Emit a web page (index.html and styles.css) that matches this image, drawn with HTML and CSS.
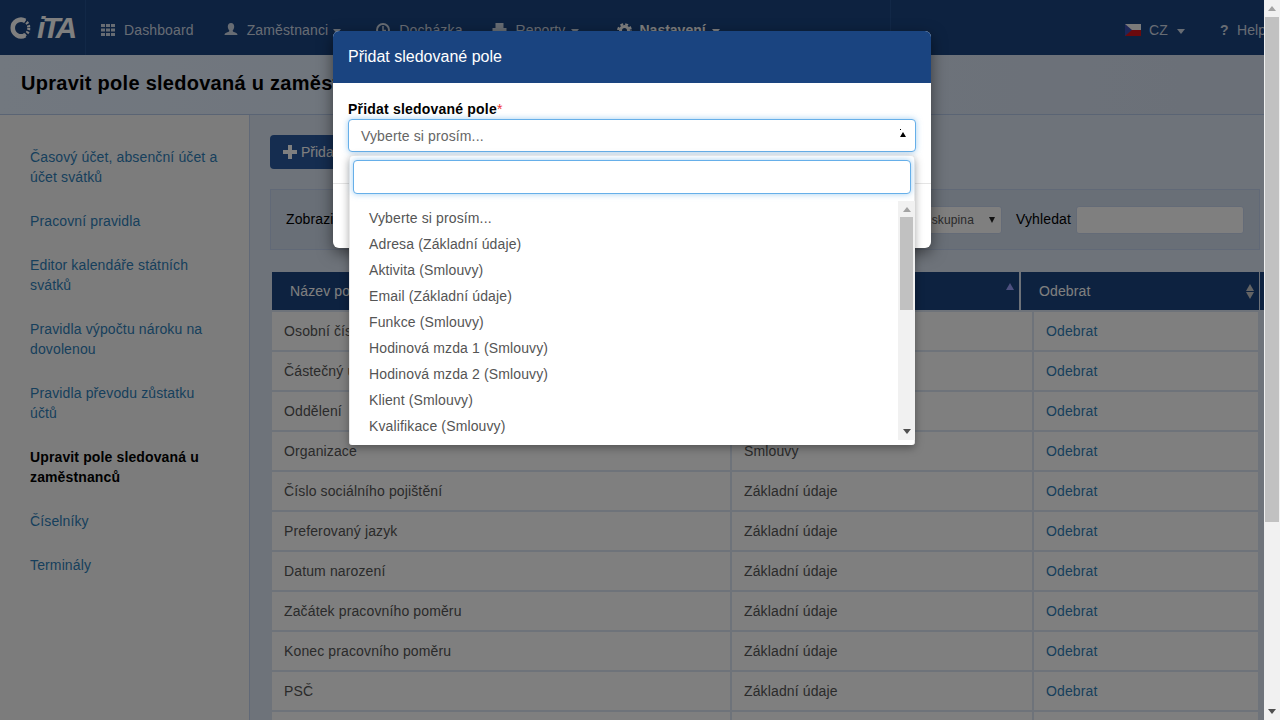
FILE: index.html
```html
<!DOCTYPE html>
<html lang="cs">
<head>
<meta charset="utf-8">
<title>Upravit pole sledovaná u zaměstnanců</title>
<link rel="stylesheet" href="styles.css">
</head>
<body>
<div class="viewport">
  <div class="app">
    <header class="nav">
      <div class="nav-left">
        <a class="logo">
          <svg class="logo-ring" width="22" height="22" viewBox="0 0 24 24"><path d="M16.5 4.200A9 9 0 1 0 16.500 19.800" fill="none" stroke="currentColor" stroke-width="5"/><circle cx="12" cy="12" r="8.600" fill="none" stroke="currentColor" stroke-width="3.600" stroke-dasharray="2.200 1.700" class="logo-dash"/></svg>
          <span class="logo-text">iTA</span>
        </a>
        <a class="nav-item first">
          <svg class="ico" width="14" height="12" viewBox="0 0 14 12"><path fill="currentColor" d="M0 0h4v3H0zM5 0h4v3H5zM10 0h4v3h-4zM0 4.500h4v3H0zM5 4.500h4v3H5zM10 4.500h4v3h-4zM0 9h4v3H0zM5 9h4v3H5zM10 9h4v3h-4z"/></svg>
          <span>Dashboard</span>
        </a>
        <a class="nav-item">
          <svg class="ico" width="14" height="14" viewBox="0 0 14 14"><path fill="currentColor" d="M7 0c2.100 0 3.200 1.500 3.200 3.600 0 1.600-.7 3.100-1.500 3.800-.2.800.4 1.200 2 1.800 1.500.6 2.800 1.200 2.800 2.800H.5c0-1.600 1.300-2.200 2.800-2.800 1.600-.6 2.200-1 2-1.800C4.500 6.700 3.800 5.200 3.800 3.600 3.800 1.500 4.900 0 7 0z"/></svg>
          <span>Zaměstnanci</span><i class="caret tight"></i>
        </a>
        <a class="nav-item">
          <svg class="ico" width="14" height="14" viewBox="0 0 14 14"><circle cx="7" cy="7" r="6" fill="none" stroke="currentColor" stroke-width="2"/><path d="M7 3v4.500h3" fill="none" stroke="currentColor" stroke-width="1.500"/></svg>
          <span>Docházka</span>
        </a>
        <a class="nav-item reports">
          <svg class="ico" width="15" height="14" viewBox="0 0 15 14"><path fill="currentColor" d="M3.500 0h8v5h3v6h-3v3h-8v-3h-3V5h3z"/></svg>
          <span>Reporty</span><i class="caret near"></i>
        </a>
        <a class="nav-item active">
          <svg class="ico" width="15" height="15" viewBox="0 0 15 15"><circle cx="7.500" cy="7.500" r="4" fill="none" stroke="currentColor" stroke-width="3"/><circle cx="7.500" cy="7.500" r="6.200" fill="none" stroke="currentColor" stroke-width="2.400" stroke-dasharray="2.800 2.070"/></svg>
          <span>Nastavení</span><i class="caret near"></i>
        </a>
      </div>
      <div class="nav-right">
        <a class="nav-lang">
          <svg class="flag" width="16" height="12" viewBox="0 0 16 12"><rect width="16" height="6" fill="#f4f4f4"/><rect y="6" width="16" height="6" fill="#d7141a"/><path d="M0 0l7 6-7 6z" fill="#3b4fb0"/></svg>
          <span>CZ</span><i class="caret wide"></i>
        </a>
        <a class="nav-help"><b class="help-mark">?</b><span>Help</span></a>
      </div>
    </header>

    <div class="band"><h1 class="title">Upravit pole sledovaná u zaměstnanců</h1></div>

    <div class="main">
      <aside class="sidebar">
        <a class="side-link">Časový účet, absenční účet a účet svátků</a>
        <a class="side-link">Pracovní pravidla</a>
        <a class="side-link">Editor kalendáře státních svátků</a>
        <a class="side-link">Pravidla výpočtu nároku na dovolenou</a>
        <a class="side-link">Pravidla převodu zůstatku účtů</a>
        <a class="side-link current">Upravit pole sledovaná u zaměstnanců</a>
        <a class="side-link">Číselníky</a>
        <a class="side-link">Terminály</a>
      </aside>

      <section class="content">
        <button class="add-btn"><svg class="plus" width="14" height="14" viewBox="0 0 14 14"><path fill="currentColor" d="M5 0h4v5h5v4H9v5H5V9H0V5h5z"/></svg>Přidat sledované pole</button>

        <div class="filter">
          <span class="filter-label">Zobrazit</span>
          <div class="fake-select"><span>Pracovní skupina</span><i class="down"></i></div>
          <span class="filter-label search-label">Vyhledat</span>
          <div class="fake-input"></div>
        </div>

        <div class="thead">
          <div class="th th-main"><span>Název pole</span><i class="sort-up"></i></div>
          <div class="th th-action"><span>Odebrat</span><i class="sort-both"></i></div>
          <div class="th-rest"></div>
        </div>

        <table class="grid">
          <colgroup><col class="c1"><col class="c2"><col class="c3"></colgroup>
          <tbody>
            <tr><td>Osobní číslo</td><td>Základní údaje</td><td><a class="link">Odebrat</a></td></tr>
            <tr><td>Částečný úvazek</td><td>Smlouvy</td><td><a class="link">Odebrat</a></td></tr>
            <tr><td>Oddělení</td><td>Smlouvy</td><td><a class="link">Odebrat</a></td></tr>
            <tr><td>Organizace</td><td>Smlouvy</td><td><a class="link">Odebrat</a></td></tr>
            <tr><td>Číslo sociálního pojištění</td><td>Základní údaje</td><td><a class="link">Odebrat</a></td></tr>
            <tr><td>Preferovaný jazyk</td><td>Základní údaje</td><td><a class="link">Odebrat</a></td></tr>
            <tr><td>Datum narození</td><td>Základní údaje</td><td><a class="link">Odebrat</a></td></tr>
            <tr><td>Začátek pracovního poměru</td><td>Základní údaje</td><td><a class="link">Odebrat</a></td></tr>
            <tr><td>Konec pracovního poměru</td><td>Základní údaje</td><td><a class="link">Odebrat</a></td></tr>
            <tr><td>PSČ</td><td>Základní údaje</td><td><a class="link">Odebrat</a></td></tr>
            <tr><td></td><td></td><td></td></tr>
          </tbody>
        </table>
      </section>
    </div>

    <div class="overlay"></div>
    <div class="modal-wrap">
      <div class="modal">
        <div class="modal-head">Přidat sledované pole</div>
        <div class="modal-body">
          <label class="field-label">Přidat sledované pole<span class="req">*</span></label>
          <div class="combo">
            <div class="combo-box"><span>Vyberte si prosím...</span><i class="combo-arrow"></i></div>
            <div class="drop">
              <div class="drop-search"><div class="search-box"></div></div>
              <div class="drop-list">
                <ul class="options">
                  <li>Vyberte si prosím...</li>
                  <li>Adresa (Základní údaje)</li>
                  <li>Aktivita (Smlouvy)</li>
                  <li>Email (Základní údaje)</li>
                  <li>Funkce (Smlouvy)</li>
                  <li>Hodinová mzda 1 (Smlouvy)</li>
                  <li>Hodinová mzda 2 (Smlouvy)</li>
                  <li>Klient (Smlouvy)</li>
                  <li>Kvalifikace (Smlouvy)</li>
                </ul>
                <div class="bar drop-bar"><i class="bar-up"></i><div class="bar-thumb drop-thumb"></div><i class="bar-down"></i></div>
              </div>
            </div>
          </div>
        </div>
        <div class="modal-foot"></div>
      </div>
    </div>
  </div>
  <div class="bar page-bar"><i class="bar-up"></i><div class="bar-thumb page-thumb"></div><i class="bar-down"></i></div>
</div>
</body>
</html>
```

FILE: styles.css
```css
* { box-sizing: border-box; }
html, body { margin: 0; padding: 0; height: 100%; overflow: hidden; }
body { font: 14px/20px "Liberation Sans", Arial, sans-serif; letter-spacing: .13px; color: #333; background: #dce3f0; }
a { text-decoration: none; color: inherit; }
ul { list-style: none; margin: 0; padding: 0; }

.viewport { display: flex; width: 1280px; height: 720px; }
.app { position: relative; width: 1264px; height: 720px; overflow: hidden; flex: none; display: flex; flex-direction: column; }

/* nav */
.nav { display: flex; flex: none; height: 55px; background: #1a4480; color: #cfd8e6; }
.nav-left { display: flex; align-items: center; width: 891px; flex: none; padding-top: 5px; border-right: 1px solid #24508f; }
.logo { display: flex; align-items: center; width: 86px; height: 55px; flex: none; margin-top: -5px; padding-left: 10px; border-right: 1px solid #24508f; color: #fff; }
.logo-ring { flex: none; }
.logo-dash { clip-path: inset(0 0 0 50%); }
.logo-text { font: italic bold 30px/30px "Liberation Sans", Arial, sans-serif; letter-spacing: -3px; margin-left: 5px; }
.nav-item { display: flex; align-items: center; padding-left: 30px; white-space: nowrap; }
.nav-item.first { padding-left: 15px; }
.nav-item.reports { padding-left: 29px; }
.nav-item .ico { flex: none; margin-right: 9px; }
.nav-item.active { font-weight: bold; color: #fff; letter-spacing: 0; padding-left: 38px; }
.nav-item.active .ico { margin-right: 7px; }
.caret { width: 0; height: 0; margin-left: 8px; margin-top: 2px; border-top: 5px solid currentColor; border-left: 4.500px solid transparent; border-right: 4.500px solid transparent; }
.caret.tight { margin-left: 5px; margin-right: 5px; }
.caret.near { margin-left: 6px; }
.caret.wide { margin-left: 9px; }
.nav-right { display: flex; align-items: center; flex: 1; padding-top: 5px; padding-left: 234px; overflow: hidden; white-space: nowrap; }
.nav-lang { display: flex; align-items: center; }
.flag { flex: none; margin-right: 8px; }
.nav-help { display: flex; align-items: center; margin-left: 35px; }
.help-mark { width: 17px; font-size: 14px; }

/* band */
.band { flex: none; height: 60px; padding: 16px 21px 0; background: linear-gradient(90deg, #e4f0ff, #d6e0f0); border-bottom: 1px solid #b4c8e8; }
.title { margin: 0; font-size: 20px; line-height: 24px; font-weight: bold; letter-spacing: .27px; color: #000; white-space: nowrap; }

/* main */
.main { display: flex; flex: 1; min-height: 0; }
.sidebar { width: 250px; flex: none; padding: 32px 30px 0; background: #f9f9f9; border-right: 1px solid #c2d2ee; display: flex; flex-direction: column; gap: 24px; }
.side-link { display: block; color: #2f7fb8; }
.side-link.current { color: #000; font-weight: bold; }

.content { flex: 1; min-width: 0; padding: 20px 4px 0 20px; background: #dde6f4; }
.add-btn { display: flex; align-items: center; width: 180px; height: 34px; padding: 0 13px; border: 0; border-radius: 4px; background: #2a5aa0; color: #fff; font: 14px/20px "Liberation Sans", Arial, sans-serif; white-space: nowrap; }
.plus { flex: none; margin-right: 4px; }

.filter { display: flex; align-items: flex-start; height: 61px; margin-top: 20px; padding: 16px 15px 0; border: 1px solid #c2d2ee; background: #d2deef; }
.filter-label { color: #000; line-height: 26px; }
.fake-select { display: flex; align-items: center; justify-content: flex-end; width: 200px; height: 28px; margin-left: auto; padding-right: 6px; background: #fff; border: 1px solid #c8d6ee; border-radius: 3px; font-size: 12px; color: #555; }
.down { margin-left: 15px; width: 0; height: 0; border-top: 6px solid #222; border-left: 3px solid transparent; border-right: 3px solid transparent; }
.search-label { margin-left: 14px; margin-right: 5px; }
.fake-input { width: 168px; height: 28px; background: #fff; border: 1px solid #c8d6ee; border-radius: 3px; }

.thead { display: flex; height: 38px; margin: 22px -4px 0 2px; background: #1a4480; color: #fff; }
.th { position: relative; display: flex; align-items: center; height: 38px; }
.th-main { width: 749px; padding-left: 18px; border-right: 2px solid #dbe4f2; flex: none; }
.th-action { width: 239px; padding-left: 18px; flex: none; border-right: 1px solid #dbe4f2; }
.th-rest { flex: 1; }
.sort-up { position: absolute; right: 5px; top: 11px; width: 0; height: 0; border-bottom: 7px solid #9ba0ff; border-left: 4.500px solid transparent; border-right: 4.500px solid transparent; }
.sort-both { position: absolute; right: 5px; top: 12px; width: 0; height: 0; border-bottom: 7px solid #c8c8c8; border-left: 4.500px solid transparent; border-right: 4.500px solid transparent; }
.sort-both::after { content: ""; position: absolute; left: -4.500px; top: 8px; width: 0; height: 0; border-top: 7px solid #c8c8c8; border-left: 4.500px solid transparent; border-right: 4.500px solid transparent; }

.grid { width: 990px; table-layout: fixed; border-collapse: separate; border-spacing: 2px; }
.c1 { width: 458px; }
.c2 { width: 300px; }
.c3 { width: 224px; }
.grid td { height: 38px; padding: 0 12px; background: #fff; color: #555; white-space: nowrap; overflow: hidden; }
.link { color: #2f7fb8; }

/* scrollbars */
.bar { position: relative; flex: none; width: 16px; background: #f1f1f1; }
.page-bar { height: 720px; }
.bar-thumb { position: absolute; left: 1px; right: 1px; background: #c1c1c1; }
.page-thumb { top: 17px; height: 505px; }
.bar-up, .bar-down { position: absolute; left: 50%; margin-left: -4px; width: 0; height: 0; border-left: 4px solid transparent; border-right: 4px solid transparent; }
.bar-up { top: 6px; border-bottom: 5px solid #a3a3a3; }
.bar-down { bottom: 6px; border-top: 5px solid #505050; }

/* modal */
.overlay { position: absolute; left: 0; top: 0; width: 1264px; height: 720px; background-color: rgba(0, 0, 0, 0.5); }
.modal-wrap { position: absolute; left: 0; top: 0; width: 1264px; height: 720px; display: flex; justify-content: center; align-items: flex-start; }
.modal { width: 598px; height: 217px; margin-top: 31px; background: #fff; border-radius: 6px; box-shadow: 0 5px 15px rgba(0,0,0,.5); display: flex; flex-direction: column; }
.modal-head { flex: none; height: 52px; padding: 16px 15px; background: #1a4480; border-radius: 6px 6px 0 0; color: #fff; font-size: 16px; line-height: 20px; letter-spacing: 0; }
.modal-body { flex: none; height: 100px; padding: 16px 15px 0; }
.field-label { display: block; font-weight: bold; line-height: 20px; color: #000; letter-spacing: .2px; }
.req { color: #e33; font-weight: normal; }
.combo { position: relative; }
.combo-box { display: flex; align-items: center; height: 33px; padding: 0 12px; border: 1px solid #66afe9; border-radius: 4px; background: #fff; color: #666; box-shadow: 0 0 6px rgba(102,175,233,.6); }
.combo-arrow { position: absolute; right: 10px; top: 13px; width: 0; height: 0; border-bottom: 5px solid #000; border-left: 3px solid transparent; border-right: 3px solid transparent; }
.combo-arrow::before { content: ""; position: absolute; left: -3px; top: -3px; width: 1px; height: 1px; background: #000; }
.drop { position: absolute; left: 1px; right: 1px; top: 36px; height: 290px; background: #fff; border: 1px solid #e8e8e8; border-bottom: 0; border-radius: 4px 4px 3px 3px; box-shadow: 0 3px 8px rgba(0,0,0,.35); }
.drop-search { padding: 4px 3px 0; }
.search-box { height: 34px; border: 1px solid #66afe9; border-radius: 4px; box-shadow: 0 0 6px rgba(102,175,233,.6); background: #fff; }
.drop-list { display: flex; justify-content: space-between; height: 239px; margin: 7px -1px 0; }
.options { flex: 1; padding-top: 4px; overflow: hidden; }
.options li { height: 26px; line-height: 26px; padding-left: 20px; color: #555; }
.drop-bar { width: 17px; height: 239px; }
.drop-thumb { top: 16px; height: 93px; left: 2px; right: 2px; }
.modal-foot { flex: 1; border-top: 1px solid #e5e5e5; }
```
